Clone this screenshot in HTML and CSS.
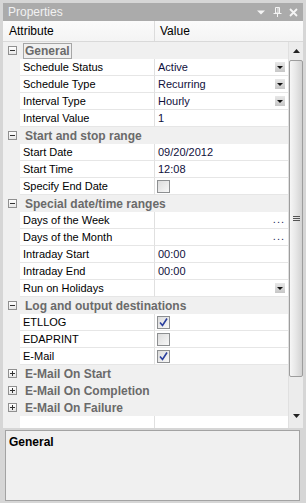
FILE: index.html
```html
<!DOCTYPE html>
<html>
<head>
<meta charset="utf-8">
<link rel="stylesheet" href="styles.css">
</head>
<body>
<div class="panel">
  <div class="titlebar">
    <span class="title">Properties</span>
    <span class="tb-icons">
      <svg width="9" height="9" viewBox="0 0 9 9"><path d="M0 2.5 H8 L4 6.5 Z" fill="#f4f4f4"/></svg>
      <svg width="9" height="10" viewBox="0 0 9 10"><path d="M2.5 0.5 H6.5 V6 H2.5 Z M5 1 V5.5 M0.5 6.5 H8.5 M4.5 6.5 V10" fill="none" stroke="#f4f4f4" stroke-width="1"/></svg>
      <svg width="9" height="9" viewBox="0 0 9 9"><path d="M1 1 L8 8 M8 1 L1 8" stroke="#f4f4f4" stroke-width="1.8"/></svg>
    </span>
  </div>
  <div class="header">
    <div class="h-attr">Attribute</div>
    <div class="h-val">Value</div>
  </div>
  <div class="grid">
    <div class="rows">
      <div class="cat"><span class="exp minus"></span><span class="cat-name focus">General</span></div>
      <div class="row"><div class="gutter"></div><div class="name">Schedule Status</div><div class="val">Active<span class="dd"></span></div></div>
      <div class="row"><div class="gutter"></div><div class="name">Schedule Type</div><div class="val">Recurring<span class="dd"></span></div></div>
      <div class="row"><div class="gutter"></div><div class="name">Interval Type</div><div class="val">Hourly<span class="dd"></span></div></div>
      <div class="row"><div class="gutter"></div><div class="name">Interval Value</div><div class="val">1</div></div>
      <div class="cat"><span class="exp minus"></span><span class="cat-name">Start and stop range</span></div>
      <div class="row"><div class="gutter"></div><div class="name">Start Date</div><div class="val">09/20/2012</div></div>
      <div class="row"><div class="gutter"></div><div class="name">Start Time</div><div class="val">12:08</div></div>
      <div class="row"><div class="gutter"></div><div class="name">Specify End Date</div><div class="val"><span class="chk"></span></div></div>
      <div class="cat"><span class="exp minus"></span><span class="cat-name">Special date/time ranges</span></div>
      <div class="row"><div class="gutter"></div><div class="name">Days of the Week</div><div class="val"><span class="ell">...</span></div></div>
      <div class="row"><div class="gutter"></div><div class="name">Days of the Month</div><div class="val"><span class="ell">...</span></div></div>
      <div class="row"><div class="gutter"></div><div class="name">Intraday Start</div><div class="val">00:00</div></div>
      <div class="row"><div class="gutter"></div><div class="name">Intraday End</div><div class="val">00:00</div></div>
      <div class="row"><div class="gutter"></div><div class="name">Run on Holidays</div><div class="val"><span class="dd"></span></div></div>
      <div class="cat"><span class="exp minus"></span><span class="cat-name">Log and output destinations</span></div>
      <div class="row"><div class="gutter"></div><div class="name">ETLLOG</div><div class="val"><span class="chk"><svg width="11" height="11" viewBox="0 0 11 11"><path d="M2 5.5 L4.5 8.5 L9 1.5" fill="none" stroke="#2a3f9e" stroke-width="1.6"/></svg></span></div></div>
      <div class="row"><div class="gutter"></div><div class="name">EDAPRINT</div><div class="val"><span class="chk"></span></div></div>
      <div class="row"><div class="gutter"></div><div class="name">E-Mail</div><div class="val"><span class="chk"><svg width="11" height="11" viewBox="0 0 11 11"><path d="M2 5.5 L4.5 8.5 L9 1.5" fill="none" stroke="#2a3f9e" stroke-width="1.6"/></svg></span></div></div>
      <div class="cat"><span class="exp plus"></span><span class="cat-name">E-Mail On Start</span></div>
      <div class="cat"><span class="exp plus"></span><span class="cat-name">E-Mail On Completion</span></div>
      <div class="cat"><span class="exp plus"></span><span class="cat-name">E-Mail On Failure</span></div>
      <div class="row"><div class="gutter"></div><div class="name"></div><div class="val"></div></div>
    </div>
    <div class="scrollbar">
      <div class="sb-btn"><svg width="7" height="4" viewBox="0 0 7 4"><path d="M0 4 H7 L3.5 0 Z" fill="#222"/></svg></div>
      <div class="sb-track">
        <div class="thumb">
          <div class="grip"><span></span><span></span><span></span></div>
        </div>
      </div>
      <div class="sb-btn bottom"><svg width="7" height="4" viewBox="0 0 7 4"><path d="M0 0 H7 L3.5 4 Z" fill="#222"/></svg></div>
    </div>
  </div>
  <div class="desc"><b>General</b></div>
</div>
</body>
</html>
```
FILE: styles.css
```css
html, body {
  margin: 0;
  padding: 0;
  background: #d6d6d6;
}

.panel {
  width: 306px;
  height: 503px;
  box-sizing: border-box;
  padding: 3px 3px 2px 3px;
  background: #d6d6d6;
  display: flex;
  flex-direction: column;
  font-family: "Liberation Sans", Arial, sans-serif;
  font-size: 11px;
  color: #000;
}

.titlebar {
  height: 18px;
  flex: none;
  background: #ababab;
  color: #f2f2f2;
  display: flex;
  align-items: center;
  padding-left: 5px;
  padding-right: 5px;
  font-size: 12px;
}

.title {
  flex: 1;
}

.tb-icons {
  display: flex;
  align-items: center;
  gap: 7px;
}

.tb-icons svg {
  display: block;
}

.header {
  height: 20px;
  flex: none;
  display: flex;
  background: linear-gradient(#fbfbfb, #f4f4f4);
  border-bottom: 1px solid #d9d9d9;
  line-height: 21px;
  font-size: 12px;
}

.h-attr {
  width: 152px;
  padding-left: 6px;
  box-sizing: border-box;
  border-right: 1px solid #dcdcdc;
}

.h-val {
  padding-left: 5px;
}

.grid {
  height: 386px;
  flex: none;
  display: flex;
  overflow: hidden;
  background: #f0f0f0;
}

.rows {
  width: 285px;
  flex: none;
  display: flex;
  flex-direction: column;
}

.cat {
  height: 17px;
  flex: none;
  display: flex;
  align-items: center;
  background: #f0f0f0;
}

.exp {
  width: 9px;
  height: 9px;
  box-sizing: border-box;
  border: 1px solid #909090;
  background: linear-gradient(#ffffff, #e6e6e6);
  margin-left: 5px;
  margin-right: 7px;
  position: relative;
  flex: none;
}

.exp::before {
  content: "";
  position: absolute;
  left: 1px;
  top: 3px;
  width: 5px;
  height: 1px;
  background: #333;
}

.exp.plus::after {
  content: "";
  position: absolute;
  left: 3px;
  top: 1px;
  width: 1px;
  height: 5px;
  background: #333;
}

.cat-name {
  font-weight: bold;
  font-size: 12px;
  color: #6a6a6a;
  line-height: 14px;
  padding: 0 1px;
  border: 1px solid transparent;
  margin-left: -1px;
}

.cat-name.focus {
  border-color: #a6a6a6;
}

.row {
  height: 17px;
  flex: none;
  display: flex;
}

.gutter {
  width: 17px;
  flex: none;
  background: #f0f0f0;
}

.name {
  width: 135px;
  flex: none;
  box-sizing: border-box;
  background: #fff;
  border-bottom: 1px solid #e6e6e6;
  border-right: 1px solid #e0e0e0;
  padding-left: 3px;
  line-height: 16px;
  white-space: nowrap;
}

.val {
  flex: 1;
  background: #fff;
  border-bottom: 1px solid #e6e6e6;
  padding-left: 3px;
  display: flex;
  align-items: center;
  color: #0f0f3c;
  line-height: 16px;
}

.dd {
  margin-left: auto;
  margin-right: 3px;
  width: 10px;
  height: 10px;
  background: linear-gradient(#e8e8e8, #c6c6c6);
  position: relative;
}

.dd::after {
  content: "";
  position: absolute;
  left: 2px;
  top: 4px;
  border-left: 3px solid transparent;
  border-right: 3px solid transparent;
  border-top: 3px solid #111;
}

.chk {
  width: 13px;
  height: 13px;
  box-sizing: border-box;
  border: 1px solid #8d8f91;
  background: linear-gradient(135deg, #dcdcdc, #f8f8f8);
  margin-left: -1px;
  display: flex;
  align-items: center;
  justify-content: center;
}

.chk svg {
  display: block;
}

.ell {
  margin-left: auto;
  margin-right: 3px;
  color: #1e2a60;
  letter-spacing: 1px;
  line-height: 18px;
  align-self: flex-end;
  font-size: 11px;
}

.scrollbar {
  width: 15px;
  flex: none;
  display: flex;
  flex-direction: column;
  background: #ececec;
  border-left: 1px solid #e0e0e0;
  box-sizing: border-box;
}

.sb-btn {
  height: 17px;
  flex: none;
  display: flex;
  align-items: center;
  justify-content: center;
}

.sb-btn svg {
  display: block;
}

.sb-btn.bottom {
  height: 20px;
  align-items: flex-start;
  padding-top: 6px;
  box-sizing: border-box;
}

.sb-track {
  flex: 1;
  display: flex;
  flex-direction: column;
  padding-bottom: 31px;
}

.thumb {
  flex: 1;
  margin-top: 1px;
  border: 1px solid #9d9d9d;
  border-radius: 2px;
  background: linear-gradient(90deg, #f6f6f6, #e6e6e6 50%, #d2d2d2);
  display: flex;
  align-items: center;
  justify-content: center;
}

.grip {
  display: flex;
  flex-direction: column;
  gap: 1px;
}

.grip span {
  display: block;
  width: 7px;
  height: 1px;
  background: #555;
}

.desc {
  height: 71px;
  flex: none;
  margin: 2px 3px 0 2px;
  box-sizing: border-box;
  border: 1px solid #a3a3a3;
  background: #f0f0f0;
  padding: 4px 3px;
  font-size: 12px;
  color: #000;
}
```
